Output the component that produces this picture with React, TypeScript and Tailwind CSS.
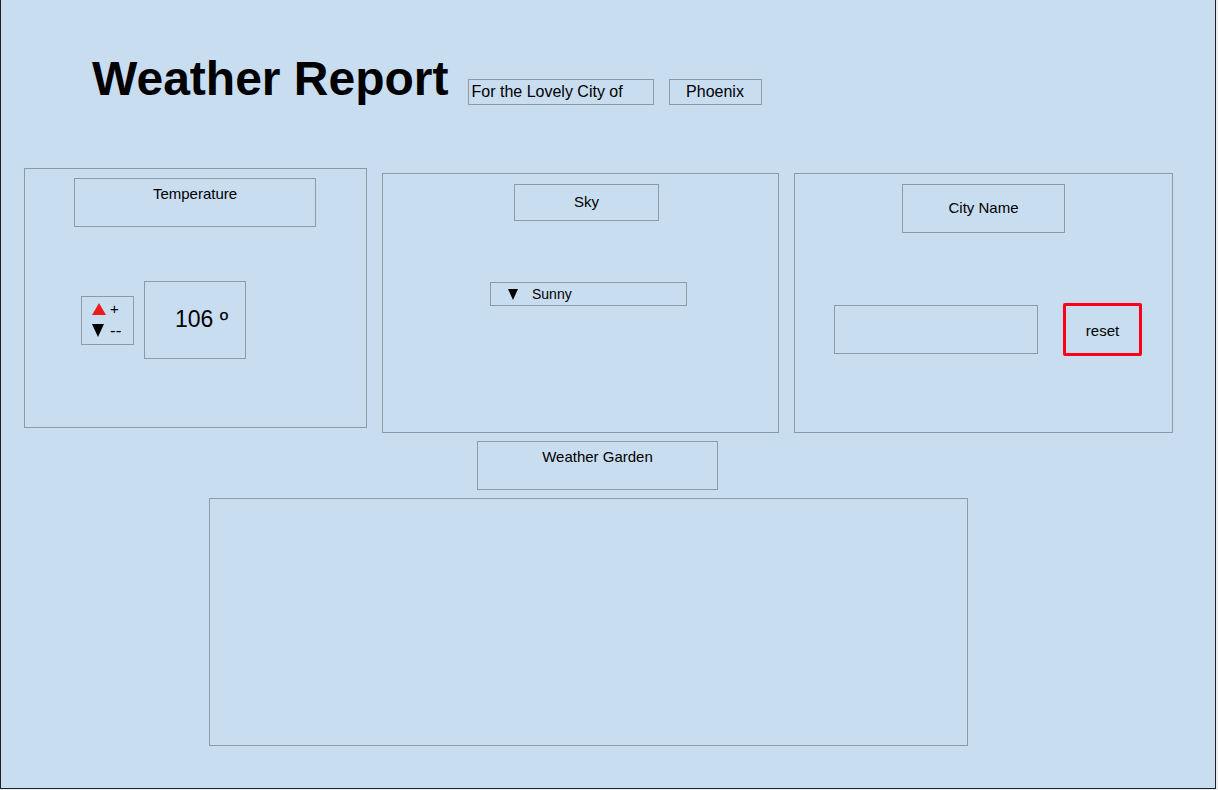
import React from "react";

const font = { fontFamily: '"Liberation Sans", Arial, sans-serif' };

function Tri({ up, color, w, h }: { up: boolean; color: string; w: number; h: number }) {
  return (
    <svg width={w} height={h} viewBox={`0 0 ${w} ${h}`} className="block shrink-0">
      {up ? (
        <polygon points={`0,${h} ${w / 2},0 ${w},${h}`} fill={color} />
      ) : (
        <polygon points={`0,0 ${w},0 ${w / 2},${h}`} fill={color} />
      )}
    </svg>
  );
}

export default function App() {
  return (
    <div className="w-[1218px] h-[790px] bg-[#ececec]" style={font}>
      <div className="w-[1216px] h-[789px] bg-[#c9ddf1] border-l border-r border-b border-[#1e2329] text-black flex flex-col">
        {/* Header */}
        <div className="h-[168px] flex items-start pl-[91px] shrink-0">
          <h1 className="mt-[55px] text-[48px] font-bold leading-none tracking-normal">Weather Report</h1>
          <div className="ml-[19px] mt-[79px] flex gap-[15px]">
            <div className="w-[186px] h-[26px] border border-[#8d9aa8] text-[16px] leading-[24px] pl-[3px]">
              For the Lovely City of
            </div>
            <div className="w-[93px] h-[26px] border border-[#8d9aa8] text-[16px] leading-[24px] text-center">
              Phoenix
            </div>
          </div>
        </div>

        {/* Panels row */}
        <div className="flex items-start pl-[23px] gap-[15px] shrink-0">
          {/* Temperature */}
          <div className="w-[343px] h-[260px] border border-[#8d9aa8] flex flex-col">
            <div className="ml-[49px] mt-[9px] w-[242px] h-[49px] border border-[#8d9aa8] text-[15px] leading-4 text-center pt-[7px]">
              Temperature
            </div>
            <div className="flex items-start ml-[56px] mt-[54px] gap-[10px]">
              <div className="mt-[15px] w-[53px] h-[49px] border border-[#8d9aa8] flex flex-col pl-[10px] pt-[6px]">
                <div className="flex items-start h-[21px]">
                  <Tri up color="#ee1b1b" w={14} h={12} />
                  <span className="ml-[4px] -mt-[2px] text-[15px] leading-[15px]">+</span>
                </div>
                <div className="flex items-start">
                  <Tri up={false} color="#000" w={12} h={13} />
                  <span className="ml-[6px] -mt-[1px] text-[17px] leading-[15px]">--</span>
                </div>
              </div>
              <div className="w-[102px] h-[78px] border border-[#8d9aa8] flex items-center pl-[30px] pb-[1px] text-[23px]">
                106 º
              </div>
            </div>
          </div>

          {/* Sky */}
          <div className="mt-[5px] w-[397px] h-[260px] border border-[#8d9aa8] flex flex-col">
            <div className="ml-[131px] mt-[10px] w-[145px] h-[37px] border border-[#8d9aa8] flex items-center justify-center text-[15px]">
              Sky
            </div>
            <div className="ml-[107px] mt-[61px] w-[197px] h-[24px] border border-[#8d9aa8] flex items-center text-[14px] pl-[17px]">
              <Tri up={false} color="#000" w={10} h={11} />
              <span className="ml-[14px]">Sunny</span>
            </div>
          </div>

          {/* City Name */}
          <div className="mt-[5px] w-[379px] h-[260px] border border-[#8d9aa8] flex flex-col">
            <div className="ml-[107px] mt-[10px] w-[163px] h-[49px] border border-[#8d9aa8] flex items-center justify-center text-[15px]">
              City Name
            </div>
            <div className="flex items-start ml-[39px] mt-[70px]">
              <div className="mt-[2px] w-[204px] h-[49px] border border-[#8d9aa8]"></div>
              <button className="ml-[25px] w-[79px] h-[53px] border-[3px] border-[#ff0019] rounded-[2px] flex items-center justify-center text-[15px] pt-[4px]">
                reset
              </button>
            </div>
          </div>
        </div>

        {/* Weather Garden */}
        <div className="ml-[476px] mt-[8px] w-[241px] h-[49px] border border-[#8d9aa8] text-[15px] leading-4 text-center pt-[7px] shrink-0">
          Weather Garden
        </div>
        <div className="ml-[208px] mt-[8px] w-[759px] h-[248px] border border-[#8d9aa8] shrink-0"></div>
      </div>
    </div>
  );
}
